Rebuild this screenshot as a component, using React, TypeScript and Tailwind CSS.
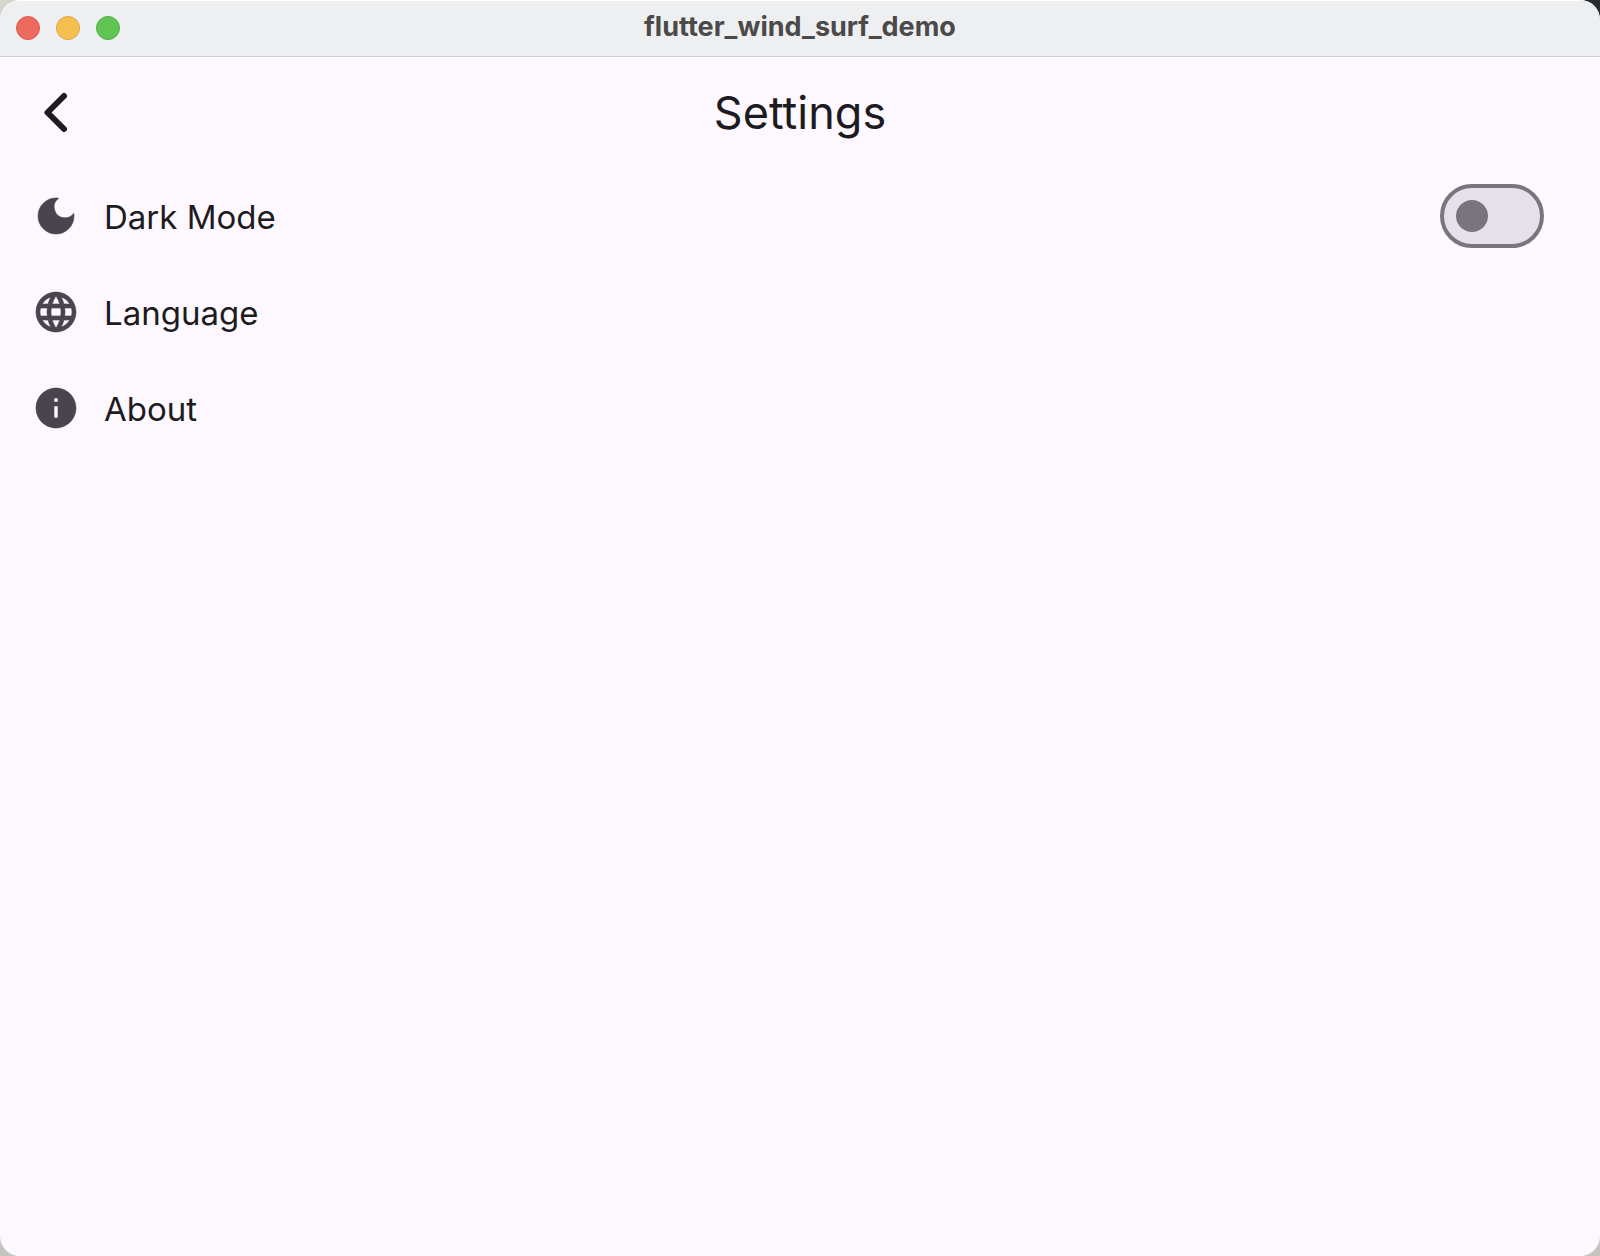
import { useState } from "react";
import type { ReactNode } from "react";

function Icon({ path }: { path: string }) {
  return (
    <svg viewBox="0 0 24 24" className="size-12 shrink-0 fill-[#49454f] stroke-[#49454f]" strokeWidth="0.3" aria-hidden="true">
      <path d={path} />
    </svg>
  );
}

const icons = {
  moon: "M12 3a9 9 0 1 0 9 9c0-.46-.04-.92-.1-1.36a5.389 5.389 0 0 1-4.4 2.26 5.403 5.403 0 0 1-3.14-9.8c-.44-.06-.9-.1-1.36-.1z",
  globe:
    "M11.99 2C6.47 2 2 6.48 2 12s4.47 10 9.99 10C17.52 22 22 17.52 22 12S17.52 2 11.99 2zm6.93 6h-2.95c-.32-1.25-.78-2.45-1.38-3.56 1.84.63 3.37 1.91 4.33 3.56zM12 4.04c.83 1.2 1.48 2.53 1.91 3.96h-3.82c.43-1.43 1.08-2.76 1.91-3.96zM4.26 14C4.1 13.36 4 12.69 4 12s.1-1.36.26-2h3.38c-.08.66-.14 1.32-.14 2s.06 1.34.14 2H4.26zm.82 2h2.95c.32 1.25.78 2.45 1.38 3.56-1.84-.63-3.37-1.9-4.33-3.56zm2.95-8H5.08c.96-1.66 2.49-2.93 4.33-3.56C8.81 5.55 8.35 6.75 8.03 8zM12 19.96c-.83-1.2-1.48-2.53-1.91-3.96h3.82c-.43 1.43-1.08 2.76-1.91 3.96zM14.34 14H9.66c-.09-.66-.16-1.32-.16-2s.07-1.35.16-2h4.68c.09.65.16 1.32.16 2s-.07 1.34-.16 2zm.25 5.56c.6-1.11 1.06-2.31 1.38-3.56h2.95c-.96 1.65-2.49 2.93-4.33 3.56zM16.36 14c.08-.66.14-1.32.14-2s-.06-1.34-.14-2h3.38c.16.64.26 1.31.26 2s-.1 1.36-.26 2h-3.38z",
  info: "M12 2C6.48 2 2 6.48 2 12s4.48 10 10 10 10-4.48 10-10S17.52 2 12 2zm1 15h-2v-6h2v6zm0-8h-2V7h2v2z",
};

const rowClass = "flex h-24 w-full items-center gap-6 pr-14 pl-8 text-left text-[33px] leading-10";

function Row({ icon, children }: { icon: string; children: ReactNode }) {
  return (
    <li>
      <button type="button" className={rowClass}>
        <Icon path={icon} />
        <span className="pt-0.5">{children}</span>
      </button>
    </li>
  );
}

export default function App() {
  const [dark, setDark] = useState(false);
  return (
    <div className="bg-[linear-gradient(90deg,#d5d4cd_50%,#2b2c31_50%)] font-['Inter',sans-serif] text-[#1d1b20]">
      <div className="bg-[linear-gradient(180deg,transparent_50%,#c4c4c0_50%)]">
        <div className="flex min-h-screen flex-col overflow-hidden rounded-[20px] bg-[#fdf8ff]">
          <header className="flex h-[57px] items-center border-t border-b border-t-white border-b-[#cfcfd1] bg-[#eeeff1] px-4 pb-0.5">
            <div className="flex flex-1 gap-4">
              <button type="button" aria-label="Close" className="size-6 rounded-full border border-[#d9584e] bg-[#ec6a5e]" />
              <button type="button" aria-label="Minimize" className="size-6 rounded-full border border-[#dba545] bg-[#f5bf4f]" />
              <button type="button" aria-label="Zoom" className="size-6 rounded-full border border-[#54ac45] bg-[#61c554]" />
            </div>
            <p className="pb-0.5 text-[27px] leading-8 font-bold text-[#4a4a4a]">flutter_wind_surf_demo</p>
            <div className="flex-1" />
          </header>
          <main>
            <div className="flex h-[111px] items-center px-8">
              <div className="flex flex-1">
                <button type="button" aria-label="Back" className="size-12">
                  <svg viewBox="0 0 48 48" className="size-12" fill="none" stroke="currentColor" strokeWidth="6" strokeLinecap="round" strokeLinejoin="round" aria-hidden="true">
                    <path d="M32 7 15.500 23.500 32 40" />
                  </svg>
                </button>
              </div>
              <h1 className="text-[45px] leading-[56px]">Settings</h1>
              <div className="flex-1" />
            </div>
            <ul>
              <li>
                <label className={rowClass}>
                  <Icon path={icons.moon} />
                  <span className="flex-1 pt-0.5">Dark Mode</span>
                  <input
                    type="checkbox"
                    role="switch"
                    checked={dark}
                    onChange={(e) => setDark(e.target.checked)}
                    className="flex h-16 w-26 appearance-none items-center rounded-full border-4 border-[#79747e] bg-[#e6e0e9] px-3 before:size-8 before:rounded-full before:bg-[#79747e] checked:justify-end"
                  />
                </label>
              </li>
              <Row icon={icons.globe}>Language</Row>
              <Row icon={icons.info}>About</Row>
            </ul>
          </main>
        </div>
      </div>
    </div>
  );
}
